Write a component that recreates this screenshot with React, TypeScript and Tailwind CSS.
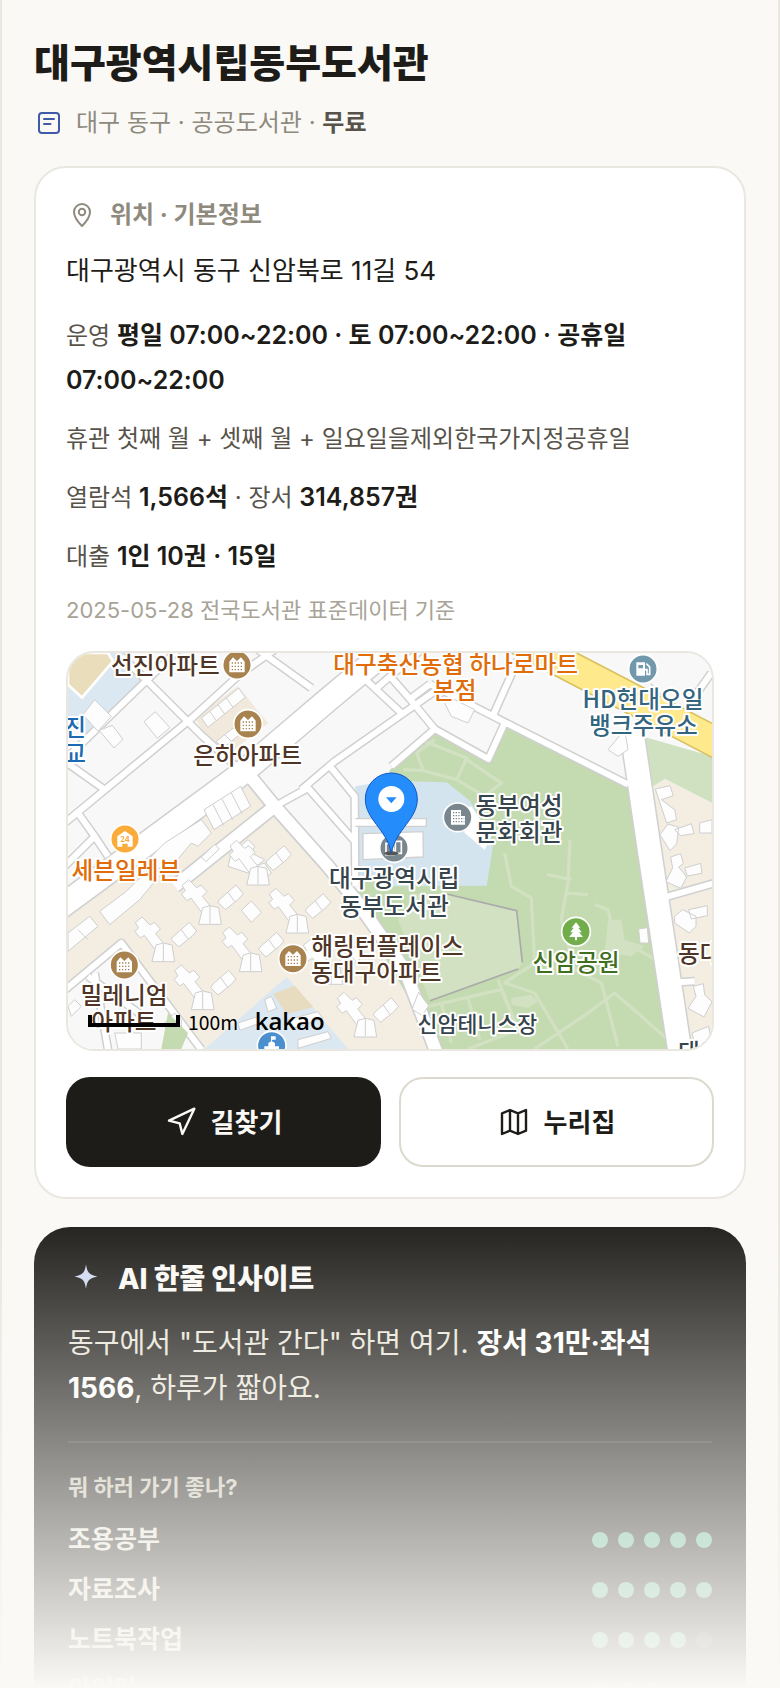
import type { ReactNode } from "react";
import { Navigation } from "lucide-react";

const MOODS = [
  { label: "조용공부", score: 5 },
  { label: "자료조사", score: 5 },
  { label: "노트북작업", score: 4 },
  { label: "아이랑", score: 3 },
];

function NoteIcon() {
  return (
    <svg viewBox="0 0 30 30" className="size-[30px] shrink-0" fill="none" stroke="#3f5aa9" strokeWidth="2" strokeLinecap="round" aria-hidden="true">
      <rect x="5" y="5" width="20" height="20" rx="3" />
      <path d="M10 11h10M10 16h6.500" />
    </svg>
  );
}

function PinIcon() {
  return (
    <svg viewBox="0 0 32 32" className="size-8 shrink-0" fill="none" stroke="#8f8a7e" strokeWidth="2" strokeLinejoin="round" aria-hidden="true">
      <path d="M16 27C13 24 8 19 8 13a8 8 0 0 1 16 0c0 6-5 11-8 14z" />
      <circle cx="16" cy="13" r="3.200" />
    </svg>
  );
}

function FoldedMapIcon() {
  return (
    <svg viewBox="0 0 24 24" className="size-8 shrink-0" fill="none" stroke="currentColor" strokeWidth="1.800" strokeLinejoin="round" aria-hidden="true">
      <path d="M3 5.500 9 3l6 2.500L21 3v15.500L15 21l-6-2.500L3 21zM9 3v15.500M15 5.500V21" />
    </svg>
  );
}

function SparkIcon() {
  return (
    <svg viewBox="0 0 36 36" className="size-9 shrink-0" fill="#d0d9f3" aria-hidden="true">
      <path d="M18 3.500c1.500 8.500 3 10 11.500 12-8.500 2-10 3.500-11.500 12-1.500-8.500-3-10-11.500-12 8.500-2 10-3.500 11.500-12z" />
    </svg>
  );
}

// A cluster of three flats seen from above; (x, y) is the middle of the hub.
function Tower({ x, y }: { x: number; y: number }) {
  return (
    <g transform={`translate(${x} ${y})`}>
      <path d="M-84-93l20-17 24 24 13-8 18 20-14 14 22 27-25 20-31-42-12 8-17-20 12-10z" />
      <path d="M28-50l50-44 22 26-14 16-40 32-22-22zM54-72l20 28" />
      <path d="M-22-26l22-6 26 6 8 50h-68zM0-30v52" />
    </g>
  );
}

function Poi({ x, y, color, children }: { x: number; y: number; color: string; children?: ReactNode }) {
  return (
    <g transform={`translate(${x} ${y})`}>
      <circle r="43" fill={color} stroke="#fff" strokeWidth="5" />
      {children}
    </g>
  );
}

function ApartmentGlyph() {
  return (
    <>
      <path d="M-23 22V-10l11-13L0-12l12-11 11 13v32z" fill="#fff" />
      <path d="M-16-6H18M-16 4H18M-16 14H18" stroke="#a8834f" strokeWidth="4" strokeDasharray="4 5" />
    </>
  );
}

const ROADS = {
  wide: ["M-40 775L516 365L780 140L960 -10", "M1690 225L1746 603L1850 1290"],
  middle: ["M530 350L620 460L780 640L870 750L1010 950L1110 1210", "M620 460L320 700"],
  narrow: [
    "M236 82L-40 350M160 10L236 82L404 250L516 350M372 195L-10 510M372 195L520 60L620 -10",
    "M236 82L290 30L330 -10M570 -10L730 105",
    "M-10 325L110 410M30 480L80 550L-20 650M80 550L120 610",
    "M620 460L720 405L860 565M700 410L800 325L1100 115M786 340L860 430L862 700",
    "M850 40L1000 180M920 110L1060 -10M970 340L1100 228L1026 138L966 70M1026 138L1086 93",
    "M1086 93L1311 208L1681 395M1100 228L1261 318L1311 208M1276 185L1350 20",
    "M1740 100L1940 310L1990 260M1930 60L1880 130",
    "M1790 733L1940 690M1830 988L1880 985M-20 1020L160 870L400 1190M80 960L120 1190M60 970L240 1100",
  ],
};

function Roads() {
  return (
    <g fill="none" strokeLinejoin="round">
      <g stroke="#d0d0d0">
        {ROADS.narrow.map((d) => <path key={d} d={d} strokeWidth="27" />)}
        {ROADS.middle.map((d) => <path key={d} d={d} strokeWidth="46" />)}
        {ROADS.wide.map((d) => <path key={d} d={d} strokeWidth="78" />)}
      </g>
      <g stroke="#fff">
        {ROADS.narrow.map((d) => <path key={d} d={d} strokeWidth="18" />)}
        {ROADS.middle.map((d) => <path key={d} d={d} strokeWidth="36" />)}
        {ROADS.wide.map((d) => <path key={d} d={d} strokeWidth="69" />)}
      </g>
    </g>
  );
}

function LibraryMap() {
  return (
    <svg
      viewBox="0 0 1932 1188"
      preserveAspectRatio="xMidYMid slice"
      className="block size-full font-['Noto_Sans_CJK_KR',sans-serif]"
      role="img"
      aria-label="대구광역시립동부도서관 주변 지도"
    >
      <rect width="1932" height="1188" fill="#f8f8f8" />

      {/* land use */}
      <path d="M0 0H180L236 82L60 250L0 190z" fill="#dbe8f1" />
      <path d="M0 80V0H120L135 25L42 134L0 95z" fill="#eaddbb" stroke="#fff" strokeWidth="8" />
      <path d="M380 195L510 100L600 210L460 320z" fill="#f1e9db" />
      <path d="M510 370L590 450L860 740L1110 1188H400L160 870L0 1010V740z" fill="#f3ede2" />
      <path d="M966 350L1100 233L1261 323L1316 218L1681 400L1801 1188H1110L862 760z" fill="#c4dab0" />
      <path d="M862 400L960 383L1136 388L1206 443L1276 573L1256 698L950 700L862 660z" fill="#d3e4ef" />
      <path d="M1040 723H1136L1346 773L1363 928L1351 948L1086 1043L990 800z" fill="#d1e1c2" />
      <path d="M1136 723L1346 773L1363 928M1351 948L1086 1043" fill="none" stroke="#aaa" strokeWidth="5" />
      <path d="M1716 248L1932 310V450L1791 378L1751 403z" fill="#d0e1c2" />
      <path d="M1751 403L1791 378L1932 450V1188H1861L1790 640z" fill="#f3ede2" />
      <path d="M656 972L840 1188H410z" fill="#dbe8f1" />
      <path d="M615 1022L680 998L736 1062L656 1084z" fill="#e8dcc0" />

      {/* park paths and courts */}
      <g fill="none" stroke="#d1e1c2" strokeWidth="10" strokeLinejoin="round">
        <path d="M1006 350L1066 353L1166 380L1196 315L1070 265M1066 353L1046 300L1100 260M1166 380L1250 430L1300 390L1196 320" />
        <path d="M1506 560L1500 690L1480 800L1520 950L1600 990L1650 1180M1436 664L1510 680M1490 720L1560 725M1580 755L1620 770L1640 850L1780 930" />
        <path d="M1310 600L1330 700L1390 735L1400 930L1310 990L1400 1020L1500 1188M1400 1188L1560 1080L1640 1020L1800 1160M1290 980L1350 1130" />
        <path d="M1080 1060L1300 1010L1350 1130L1200 1188M1120 1050L1150 1170M1200 1035L1235 1160" />
      </g>
      <path d="M1620 800h40l10 60 60 20-40 30-80-10zM1330 1035l60-10 20 20-30 20-50-10z" fill="#d1e1c2" />

      <Roads />

      <g fill="#fff" stroke="#d0d0d0" strokeWidth="4">
        <path d="M862 497H1075V520H862M885 542L1065 536L1066 612L885 620z" />
        <path d="M1180 470l30-10 60 90-20 40-60-50z" stroke="none" />
      </g>

      <path d="M1331 0H1526L1932 211V313z" fill="#ffe98d" />
      <path d="M1331 0L1932 313M1526 0L1932 211" stroke="#d8c05c" strokeWidth="5" />

      {/* buildings */}
      <g fill="#fdfdfd" stroke="#cfcfcf" strokeWidth="3" strokeLinejoin="round">
        <path d="M45 185l35-45 50 50-40 45zM93 232l40-15 32 42-27 26zM228 206l34-30 44 48-38 32z" />
        <path d="M400 195l112-90 20 28-112 90zM425 175l20 28M450 155l20 28M475 135l20 28" />
        <path d="M445 265l50-40 20 20-50 40zM470 245l20 20" />
        <path d="M408 470l110-70 30 60-110 70zM435 455l32 62M462 438l32 62M490 420l32 62" />
        <path d="M290 570l110-70 30 40-40 40-20-10-50 60-60 20-30-20z" />
        <path d="M490 600l50-40 20 20-10 20 40 20-50 40-60-20zM560 640l30-10 20 30-40 30z" />
        <path d="M95 775l80-60 60-60 30 25-50 60-90 75zM0 840l65-50 25 30-90 75zM30 830l30 30" />
        <path d="M400 612l40-38 14 14-40 38zM520 772l30-28 30 34-30 30z" />
        <path d="M1120 130l30 60 50 20 20-40-60-30zM1620 290l50-60 10 60-30 20z" />
        <path d="M1762 408l44-10 10 30-36 12 40 30 6 30-30 10zM1820 530l50-18 8 30-40 6zM1776 545l24-32 32 10-6 50-20 20zM1895 510l37-10v40h-37z" />
        <path d="M1808 612l30-10 8 30-14 10 24 30-18 34-44-20 20-42zM1850 645l48-14 4 30-44 8zM1820 790l24-20 40 20v30l-20 20-44-30zM1862 770l56-12v30l-48 10z" />
        <path d="M1876 1000l30-8 4 34 22 20-24 46-48-26 24-36zM1872 1140l50-20 10 60h-50zM1712 828l26-4 4 46h-26z" />
        <path d="M1052 1018l30 40-20 30-30-20z" />
        <path d="M510 1110l60-20 6 20-60 22zM590 1040l20-10 16 36-26 10zM660 1100l90-24 14 20-90 30zM690 1160l90-24 10 20-100 30z" />
        <path d="M140 1140h80v48h-70zM0 1060l20-20 20 20-30 30zM290 1110l30-30 20 20v40l-40 20z" />
        <Tower x={426} y={790} />
        <Tower x={286} y={902} />
        <Tower x={688} y={816} />
        <Tower x={548} y={932} />
        <Tower x={404} y={1046} />
        <Tower x={570} y={672} />
        <Tower x={892} y={1128} />
        <Tower x={790} y={970} />
      </g>
      <path d="M300 1080l60 60-20 48h-60z" fill="#c4dab0" />

      {/* places */}
      <Poi x={507} y={36} color="#a8834f"><ApartmentGlyph /></Poi>
      <Poi x={540} y={213} color="#a8834f"><ApartmentGlyph /></Poi>
      <Poi x={169} y={936} color="#a8834f"><ApartmentGlyph /></Poi>
      <Poi x={675} y={917} color="#a8834f"><ApartmentGlyph /></Poi>
      <Poi x={171} y={558} color="#fbab3a">
        <path d="M-23 23V-8L0-24 23-8v31H8V14H-8v9z" fill="#fff" />
        <text y="8" textAnchor="middle" fontSize="24" fontWeight="700" fill="#fbab3a">24</text>
      </Poi>
      <Poi x={1725} y={48} color="#7298ac">
        <path d="M-20 20v-40H6v40z" fill="#fff" />
        <path d="M-12-12H-2M10-16l10 10V16h-8V2H6" fill="none" stroke="#fff" strokeWidth="5" />
        <path d="M-14-12h14v10h-14z" fill="#7298ac" />
      </Poi>
      <Poi x={1169} y={493} color="#79868d">
        <path d="M-20 22v-44H10V-4H22v26z" fill="#fff" />
        <path d="M-14-14H8M-14-5H8M-14 4H20M-14 13H20" stroke="#79868d" strokeWidth="4" strokeDasharray="4 4" />
      </Poi>
      <Poi x={978} y={585} color="#79868d">
        <path d="M-24-14H-4L0 20H-24zM4-20H22V16H4z" fill="none" stroke="#fff" strokeWidth="5" />
      </Poi>
      <Poi x={611} y={1178} color="#4b8fcf">
        <path d="M-22 22V2H-10V-8L0-14 10-8V2H22V22zM-2-12V-28H12V-18H2z" fill="#fff" />
      </Poi>
      <Poi x={1524} y={836} color="#72ad4b">
        <path d="M0-28L13-12H7L17 2H9L21 16H3V26H-3V16H-21L-9 2H-17L-7-12H-13z" fill="#fff" />
      </Poi>

      <g fontSize="71" fontWeight="500" stroke="#fff" strokeWidth="12" strokeLinejoin="round" paintOrder="stroke" textAnchor="middle">
        <g fill="#4f3526">
          <text x="292" y="64">선진아파트</text>
          <text x="539" y="332">은하아파트</text>
          <text x="168" y="1054">밀레니엄</text>
          <text x="168" y="1132">아파트</text>
          <text x="958" y="905">해링턴플레이스</text>
          <text x="925" y="985">동대구아파트</text>
          <text x="1895" y="928">동대</text>
        </g>
        <g fill="#1c6ab2">
          <text x="21" y="250">진</text>
          <text x="21" y="327">교</text>
        </g>
        <g fill="#e06c0a">
          <text x="174" y="677">세븐일레븐</text>
          <text x="1163" y="61">대구축산농협 하나로마트</text>
          <text x="1160" y="139">본점</text>
        </g>
        <g fill="#33657f">
          <text x="1725" y="165">HD현대오일</text>
          <text x="1726" y="243">뱅크주유소</text>
        </g>
        <g fill="#36444c">
          <text x="979" y="703">대구광역시립</text>
          <text x="979" y="785">동부도서관</text>
          <text x="1353" y="483">동부여성</text>
          <text x="1353" y="563">문화회관</text>
          <text x="1228" y="1138" fontSize="65">신암테니스장</text>
          <text x="1895" y="1223">태왕</text>
        </g>
        <text x="1524" y="955" fill="#3f6e1f">신암공원</text>
      </g>

      {/* selected place */}
      <g transform="translate(970 438)">
        <ellipse cy="163" rx="22" ry="6" fill="#555" />
        <path d="M0 162C-14 90-78 62-78 0a78 78 0 0 1 156 0C78 62 14 90 0 162z" fill="#258cfb" stroke="#1257c5" strokeWidth="3" />
        <circle r="39" fill="#fff" />
        <path d="M-16-5H16L0 13z" fill="#258cfb" />
      </g>

      {/* scale bar and provider mark */}
      <path d="M66 1086V1116H330V1086" fill="none" stroke="#000" strokeWidth="12" />
      <text x="360" y="1131" fontSize="58" fill="#000">100m</text>
      <text x="560" y="1130" fontSize="72" fontWeight="600" fill="#000" fontFamily="Open Sans, sans-serif">kakao</text>
    </svg>
  );
}

function Dots({ score }: { score: number }) {
  return (
    <span className="flex gap-[10px]" role="img" aria-label={`5점 만점에 ${score}점`}>
      {[1, 2, 3, 4, 5].map((n) => (
        <span key={n} className={n <= score ? "size-4 rounded-full bg-[#62b697]" : "size-4 rounded-full bg-white/15"} />
      ))}
    </span>
  );
}

function InfoCard() {
  return (
    <section className="mt-7 rounded-[32px] border-2 border-[#e9e7e0] bg-white p-[30px]">
      <h2 className="flex items-center gap-3 text-2xl/[34px] font-bold text-[#8f8a7e]">
        <PinIcon />
        위치 · 기본정보
      </h2>
      <p className="mt-[17px] text-[26px]/[44px]">대구광역시 동구 신암북로 11길 54</p>

      <div className="mt-5 flex flex-col gap-[14px] text-2xl/[44px] text-[#57534a] [&_b]:text-[25px]/[44px] [&_b]:font-semibold [&_b]:text-[#1d1c18]">
        <p>운영 <b>평일 07:00~22:00 · 토 07:00~22:00 · 공휴일 07:00~22:00</b></p>
        <p>휴관 첫째 월 + 셋째 월 + 일요일을제외한국가지정공휴일</p>
        <p>열람석 <b>1,566석</b> · 장서 <b>314,857권</b></p>
        <p>대출 <b>1인 10권 · 15일</b></p>
        <p className="text-[22px]/[34px] text-[#a8a396]">2025-05-28 전국도서관 표준데이터 기준</p>
      </div>

      <div className="mt-6 h-[400px] overflow-hidden rounded-[28px] border-2 border-[#e9e7e0]">
        <LibraryMap />
      </div>

      <div className="mt-[26px] grid grid-cols-2 gap-[18px] text-[26px] font-bold">
        <button type="button" className="flex h-[90px] items-center justify-center gap-[14px] rounded-3xl bg-[#1d1c18] text-[#faf9f5]">
          <Navigation className="size-8" strokeWidth={1.8} aria-hidden="true" />
          길찾기
        </button>
        <button type="button" className="flex h-[90px] items-center justify-center gap-[14px] rounded-3xl border-2 border-[#dcd9cf] bg-white">
          <FoldedMapIcon />
          누리집
        </button>
      </div>
    </section>
  );
}

function InsightCard() {
  return (
    <section className="mt-7 rounded-[36px] bg-[#1d1c18] p-[34px] text-[#e9e5da]">
      <h2 className="flex items-center gap-[14px] text-[28px]/[34px] font-extrabold text-[#faf9f5]">
        <SparkIcon />
        AI 한줄 인사이트
      </h2>
      <p className="mt-6 text-[28px]/[45px]">
        동구에서 "도서관 간다" 하면 여기. <b className="font-bold text-white">장서 31만·좌석 1566</b>, 하루가 짧아요.
      </p>

      <div className="mt-[30px] border-t-2 border-white/10 pt-7">
        <h3 className="text-[22px]/[32px] font-bold text-[#c9c4b6]">뭐 하러 가기 좋나?</h3>
        <ul className="mt-3 text-[25px] font-semibold">
          {MOODS.map((mood) => (
            <li key={mood.label} className="flex h-[50px] items-center justify-between">
              {mood.label}
              <Dots score={mood.score} />
            </li>
          ))}
        </ul>
      </div>
    </section>
  );
}

export default function App() {
  return (
    <div className="relative h-screen overflow-hidden bg-[#faf9f5] font-['Inter','Noto_Sans_CJK_KR',sans-serif] text-[#1d1c18]">
      <main className="min-h-full border-x-2 border-[#e9e7e0] px-8 pt-[38px] break-keep">
        <h1 className="text-[39px]/[50px] font-extrabold">대구광역시립동부도서관</h1>
        <p className="mt-5 flex items-center gap-3 text-2xl/[30px] text-[#8f8a7e]">
          <NoteIcon />
          <span>
            대구 동구 · 공공도서관 · <b className="font-semibold text-[#57534a]">무료</b>
          </span>
        </p>
        <InfoCard />
        <InsightCard />
      </main>

      {/* the page fades out under the fold */}
      <div className="pointer-events-none absolute inset-x-0 bottom-0 h-[480px] bg-linear-to-b from-[#faf9f5]/0 to-[#faf9f5]" />
    </div>
  );
}
